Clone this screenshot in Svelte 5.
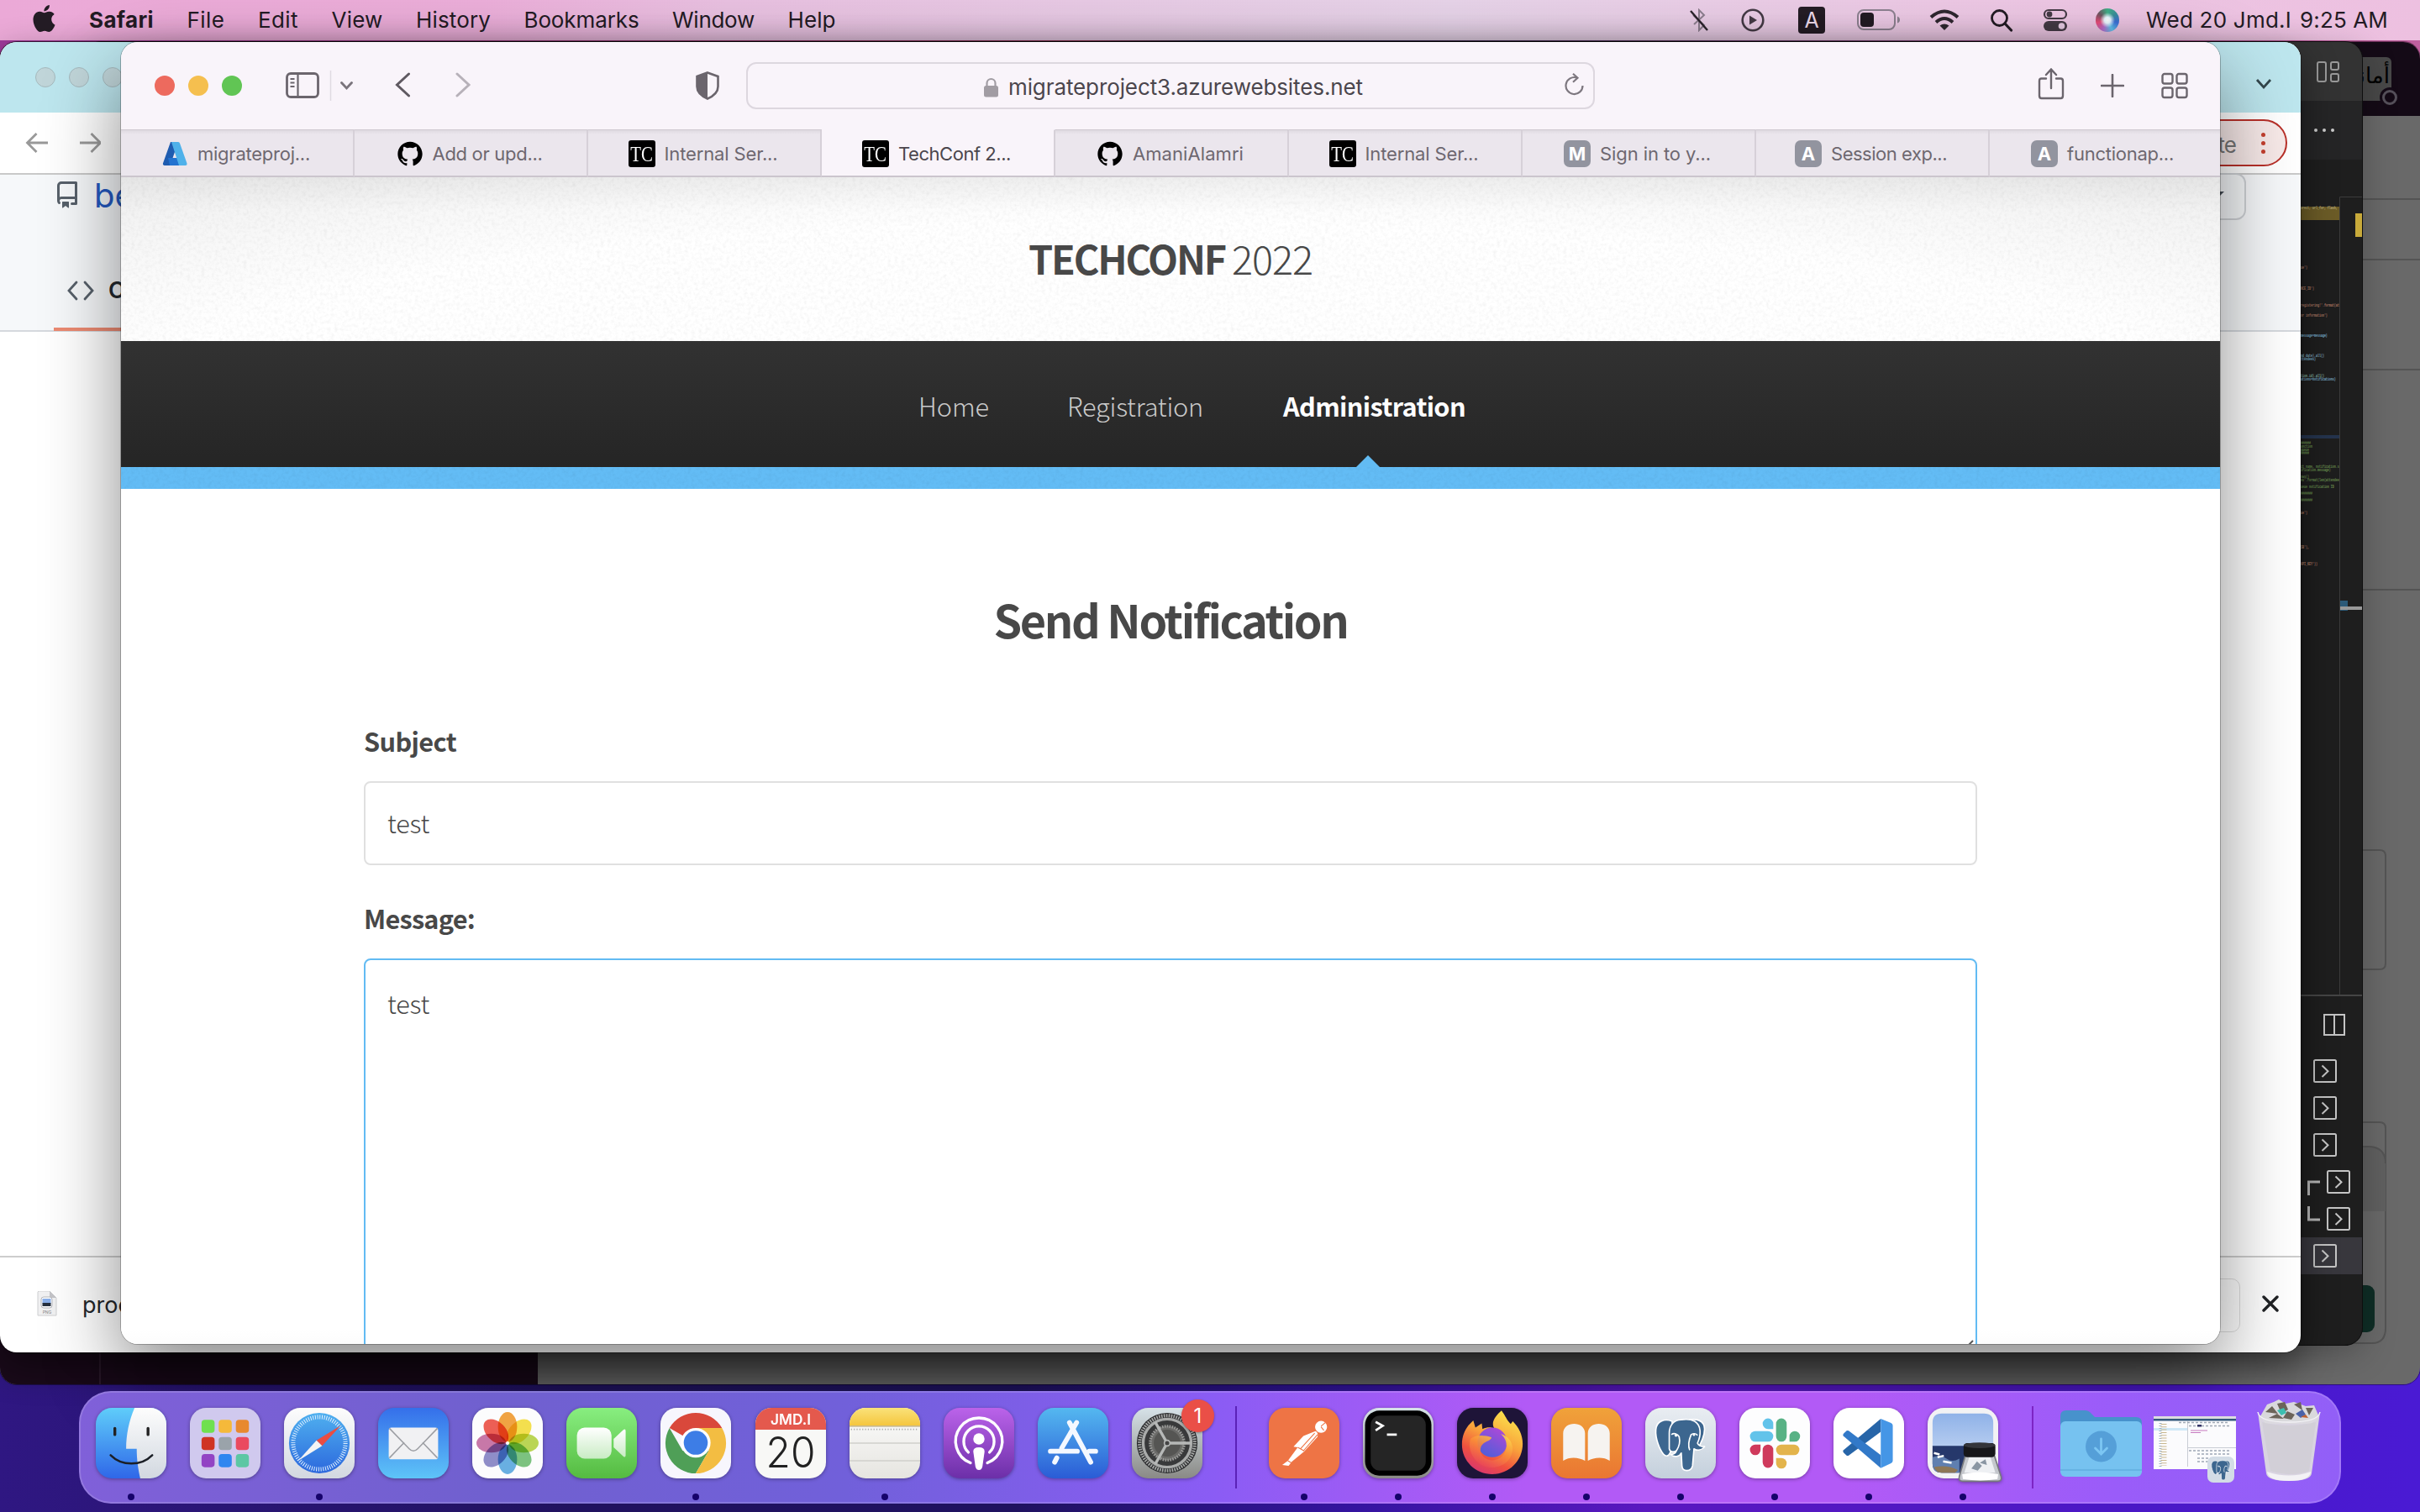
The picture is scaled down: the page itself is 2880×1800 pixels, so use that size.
<script>
  // Spreads or tightens letters so that a run of text takes a given width.
  function fit(node, width) {
    node.style.letterSpacing = '0px';
    const natural = node.getBoundingClientRect().width;
    const n = node.textContent.length;
    node.style.letterSpacing = (width - natural) / n + 'px';
  }

  const menus = [
    ['File', 45], ['Edit', 48], ['View', 61], ['History', 89],
    ['Bookmarks', 137], ['Window', 98], ['Help', 57]
  ];

  const tabs = [
    { icon: 'azure', label: 'migrateproj...', w: 134 },
    { icon: 'github', label: 'Add or upd...', w: 131 },
    { icon: 'tc', label: 'Internal Ser...', w: 135 },
    { icon: 'tc', label: 'TechConf 2...', w: 134, active: true },
    { icon: 'github', label: 'AmaniAlamri', w: 132 },
    { icon: 'tc', label: 'Internal Ser...', w: 135 },
    { icon: 'M', label: 'Sign in to y...', w: 132 },
    { icon: 'A', label: 'Session exp...', w: 138 },
    { icon: 'A', label: 'functionap...', w: 127 }
  ];

  const apps = [
    { id: 'finder', dot: true }, { id: 'launchpad' }, { id: 'safari', dot: true },
    { id: 'mail' }, { id: 'photos' }, { id: 'facetime' }, { id: 'chrome', dot: true },
    { id: 'calendar' }, { id: 'notes', dot: true }, { id: 'podcasts' },
    { id: 'appstore' }, { id: 'settings' }
  ];
  const recent = ['postman', 'terminal', 'firefox', 'books', 'postgres', 'slack', 'vscode', 'preview'];

  const code = [
    [236.7, '#b5a878', 'urect, url_for, flash,'], [290, '#b07a66', "ue')"], [308, '#b07a66', "NCE_ID')"],
    [323, '#b07a66', "registering!'.format(at"], [332, '#b07a66', "or information')"],
    [350, '#7fb4d8', 'message=message)'], [368, '#86b0c8', 'nd_date).all()'], [371, '#7fb4d8', 'ttendees)'],
    [386, '#8ab8a8', 'tion.id).all()'], [389, '#7fb4d8', 'ations=notifications)'],
    [445.5, '#6a9150', '######'], [448.5, '#6a9150', 'unction'], [451.5, '#6a9150', 'queue'], [454.5, '#6a9150', '#####'],
    [466.5, '#6a9150', 'ct_name, notification.s'], [469.5, '#6a9150', 'ification.message)'],
    [475.5, '#6a9150', 'ows()'], [478.5, '#6a9150', "es'.format(len(attendee"],
    [484.5, '#6a9150', 'ueue notification ID'], [490.5, '#6a9150', '#######'], [496.5, '#6a9150', '#######'],
    [508, '#b07a66', "ue')"], [538, '#b07a66', "SB'),"], [553, '#b07a66', "API_KEY'))"]
  ];
  const petals = ['#f29b2e', '#f5df3a', '#b5d443', '#6fbf73', '#5aa9e0', '#8583c4', '#c46aa0', '#ee4f43'];
  const launch = ['#6fe04f', '#f5b93a', '#e8892f', '#cf3423', '#9aa3aa', '#ea4a60', '#9243c4', '#2f86f0', '#5cc7a4'];
  const terminals = [0, 0, 0, 1, 2, 0];
</script>

{#snippet favicon(kind)}
  {#if kind === 'azure'}
    <svg class="fav" viewBox="0 0 32 32">
      <path d="M11 2h9L10.500 30H4a2 2 0 0 1-2-2.700z" fill="#1f5cb0" />
      <path d="M8 21h14l3 7-4 2H10z" fill="#2373d0" />
      <path d="M12 2h8a2 2 0 0 1 2 1.500l8.500 24A2 2 0 0 1 29 30h-8z" fill="#4fb1ea" />
    </svg>
  {:else if kind === 'github'}
    <svg class="fav" viewBox="0 0 24 24"><g transform="translate(1 1) scale(.916)"><path d="M12 .297c-6.63 0-12 5.373-12 12 0 5.303 3.438 9.800 8.205 11.385.6.113.82-.258.82-.577 0-.285-.01-1.040-.015-2.040-3.338.724-4.042-1.610-4.042-1.610C4.422 18.070 3.633 17.700 3.633 17.700c-1.087-.744.084-.729.084-.729 1.205.084 1.838 1.236 1.838 1.236 1.070 1.835 2.809 1.305 3.495.998.108-.776.417-1.305.76-1.605-2.665-.3-5.466-1.332-5.466-5.930 0-1.310.465-2.380 1.235-3.220-.135-.303-.54-1.523.105-3.176 0 0 1.005-.322 3.300 1.230.96-.267 1.980-.399 3-.405 1.020.006 2.040.138 3 .405 2.280-1.552 3.285-1.230 3.285-1.230.645 1.653.24 2.873.12 3.176.765.84 1.230 1.910 1.230 3.220 0 4.610-2.805 5.625-5.475 5.920.42.36.81 1.096.81 2.220 0 1.606-.015 2.896-.015 3.286 0 .315.21.69.825.57C20.565 22.092 24 17.592 24 12.297c0-6.627-5.373-12-12-12" /></g></svg>
  {:else if kind === 'tc'}
    <span class="fav tc"><span>TC</span></span>
  {:else}
    <span class="fav letter">{kind}</span>
  {/if}
{/snippet}

{#snippet elephant()}
  <g fill="#3c668f" stroke="#fff" stroke-width="2" stroke-linejoin="round">
    <path d="M38 19c-10-4-22-1-23 12-1 12 5 28 11 35 4 4 7 2 9-2l5-8z" />
    <path d="M60 18c12-4 24 0 24 12 0 11-6 22-11 30l-8-4z" />
    <path d="M51 17c-10 0-17 7-17 19v22c1 5 6 5 10 3-1 3-4 5-8 5 5 5 13 3 15-2l1 19c1 8 13 8 15-1l2-24c5 3 11 2 15-3-5 0-9-2-10-5 5-11 6-25-4-31-6-3-13-3-19-2z" />
    <path d="M37 38c4-3 9-1 11 3 2 8 0 14-4 20M63 60c-3-7-1-15 2-22 3-2 7-2 9 1" fill="none" />
  </g>
  <circle cx="43.500" cy="39" r="2" fill="#fff" /><circle cx="69" cy="38" r="1.800" fill="#fff" />
{/snippet}

{#snippet appIcon(id)}
  <svg class="app" viewBox="0 0 100 100">
    {#if id === 'finder'}
      <rect width="100" height="100" rx="23" fill="url(#g-face)" />
      <path d="M55 0h22a23 23 0 0 1 23 23v54a23 23 0 0 1-23 23H63c-3-14-5-26-5-42H43C43 38 47 18 55 0z" fill="url(#g-white)" />
      <path d="M27 29v9M74 29v9" stroke="#222" stroke-width="4" stroke-linecap="round" />
      <path d="M21 67c16 16 43 16 59 0" fill="none" stroke="#1b1f26" stroke-width="3" stroke-linecap="round" />
    {:else if id === 'launchpad'}
      <rect width="100" height="100" rx="23" fill="#d0c9ee" />
      {#each launch as c, i}
        <rect x={16.500 + (i % 3) * 24.300} y={17 + Math.floor(i / 3) * 24.300} width="18.500" height="18.500" rx="4.500" fill={c} />
      {/each}
    {:else if id === 'safari'}
      <rect width="100" height="100" rx="23" fill="url(#g-white)" />
      <circle cx="50" cy="50" r="43" fill="url(#g-blue)" />
      <circle cx="50" cy="50" r="37" fill="none" stroke="#dff0ff" stroke-width="6" stroke-dasharray="1.200 2.030" />
      <path d="M80.500 25 46 46l8 8z" fill="#ea4d43" /><path d="M20 75 46 46l8 8z" fill="#f4f4f4" />
    {:else if id === 'mail'}
      <rect width="100" height="100" rx="23" fill="url(#g-mail)" />
      <rect x="15" y="28" width="70" height="45" rx="4" fill="#f1f1f3" />
      <path d="M16 71l21-22M84 71 63 49M16 29l28 29c4 4 8 4 12 0l28-29" fill="none" stroke="#9c9ea3" stroke-width="1.800" />
    {:else if id === 'photos'}
      <rect width="100" height="100" rx="23" fill="#fcfcfd" />
      <g class="petals">
        {#each petals as c, i}
          <ellipse cx="50" cy="27" rx="13.500" ry="21" fill={c} opacity=".9" transform="rotate({i * 45} 50 50)" />
        {/each}
      </g>
      <circle cx="50" cy="50" r="2" fill="#fff" />
    {:else if id === 'facetime'}
      <rect width="100" height="100" rx="23" fill="url(#g-green)" />
      <rect x="15" y="28" width="49" height="44" rx="11" fill="url(#g-cam)" />
      <path d="M67 44 81 31q3-2 3 2v34q0 4-3 2L67 56z" fill="url(#g-cam)" />
    {:else if id === 'chrome'}
      <rect width="100" height="100" rx="23" fill="#f7f6fd" />
      <path d="M50 50 12.800 28.500A43 43 0 0 1 87.200 28.500H50z" fill="#d9483b" />
      <path d="M12.800 28.500 31.400 60.750 68.600 60.750 50 93A43 43 0 0 1 12.800 28.500" fill="#4f9f57" />
      <path d="M87.200 28.500H50L68.600 60.750 50 93A43 43 0 0 0 87.200 28.500" fill="#f3bd42" />
      <circle cx="50" cy="49.500" r="21" fill="#fff" /><circle cx="50" cy="49.500" r="17" fill="#3d7de6" />
    {:else if id === 'calendar'}
      <rect width="100" height="100" rx="23" fill="#f8f8f6" />
      <path d="M0 31V23A23 23 0 0 1 23 0h54a23 23 0 0 1 23 23v8z" fill="#e4594d" />
      <text x="50" y="23.500" class="cal-month" textLength="57" lengthAdjust="spacingAndGlyphs">JMD.I</text>
      <text x="50" y="84" class="cal-day" textLength="70" lengthAdjust="spacingAndGlyphs">20</text>
    {:else if id === 'notes'}
      <rect width="100" height="100" rx="23" fill="url(#g-paper)" />
      <path d="M0 25v-2A23 23 0 0 1 23 0h54a23 23 0 0 1 23 23v2z" fill="url(#g-yellow)" />
      <path d="M0 26h100" stroke="#b9a46a" stroke-width="1.500" />
      <path d="M2 30.500h96" stroke="#aaa" stroke-width="2" stroke-dasharray="1.500 2.500" />
      <path d="M0 50h100M0 75h100" stroke="#cfcfcc" stroke-width="1.800" />
    {:else if id === 'podcasts'}
      <rect width="100" height="100" rx="23" fill="url(#g-pod)" />
      <g fill="none" stroke="#fff" stroke-width="4" stroke-linecap="round">
        <path d="M38 78a33 33 0 1 1 24 0" /><path d="M35 63a21.500 21.500 0 1 1 30 0" />
      </g>
      <circle cx="50" cy="44" r="8" fill="#fff" /><path d="M42 62q0-6 8-6t8 6l-3 21q-1 5-5 5t-5-5z" fill="#fff" />
    {:else if id === 'appstore'}
      <rect width="100" height="100" rx="23" fill="url(#g-store)" />
      <g stroke="#f4f8ff" stroke-width="7" stroke-linecap="round">
        <path d="M55 21 34 57M45 21 75 77M18 61.500h38M73 61.500h9M27 71l-3 6" />
      </g>
    {:else if id === 'settings'}
      <rect width="100" height="100" rx="23" fill="url(#g-grey)" />
      <circle cx="50" cy="50" r="43" fill="#2b2c2e" />
      <circle cx="50" cy="50" r="39" fill="none" stroke="#a5a7a6" stroke-width="5" stroke-dasharray="2 1.500" />
      <circle cx="50" cy="50" r="34" fill="#38393a" stroke="#a9abaa" stroke-width="4" />
      <circle cx="50" cy="50" r="24" fill="#6b6b69" stroke="#9a9a98" stroke-width="4" stroke-dasharray="2 1.500" />
      <circle cx="50" cy="50" r="19" fill="#555553" />
      <path d="M50 50h34M50 50 33 20M50 50 33 80" stroke="#b6b8b7" stroke-width="4" />
      <circle cx="50" cy="50" r="4" fill="#444" stroke="#b6b8b7" stroke-width="2" />
    {:else if id === 'postman'}
      <rect width="100" height="100" rx="23" fill="#ee7445" />
      <circle cx="74" cy="27" r="8.500" fill="#fff" />
      <path d="M66 33c3 1 4 4 3 8L50 62 33 76l-5 6-9-1 8-6 14-19-6-1 14-15z" fill="#fff" />
      <path d="M65 36 45 58M69 38 49 61M41 56l9 5M74 26l6-5M74 27l4 5M27 75l5 3" stroke="#ee7445" stroke-width="1.300" />
    {:else if id === 'terminal'}
      <rect width="100" height="100" rx="23" fill="url(#g-grey)" />
      <rect x="3" y="4" width="94" height="92" rx="20" fill="#000" />
      <rect x="11" y="11" width="78" height="78" rx="13" fill="#252525" />
      <path d="m18 20 10 5.500L18 32M34 38h14" fill="none" stroke="#fff" stroke-width="3.200" />
    {:else if id === 'firefox'}
      <rect width="100" height="100" rx="23" fill="#1e1438" />
      <path d="M7 52c0-12 4-20 9-27l7-7 3 10 9-6 1 8c8-4 13-2 17-1-6-8 2-18 10-25 6 8 7 13 13 19l3-4c8 8 14 19 14 32 0 24-19 43-43 43S7 75 7 52z" fill="url(#g-fox)" />
      <circle cx="50" cy="49" r="21" fill="url(#g-orb)" />
      <path d="M19 44c6-6 20-6 30-2-2 5-7 5-11 8-8 6-6 18 5 23 12 5 27-4 27-19 0-8-3-12-8-17 13 4 20 16 15 30-7 19-36 24-50 8-8-9-11-20-8-31z" fill="url(#g-fox2)" opacity=".9" />
    {:else if id === 'books'}
      <rect width="100" height="100" rx="23" fill="url(#g-orange)" />
      <path d="M48 75c-9-5-22-6-31 0V36c0-18 31-18 31 0zM52 75c9-5 22-6 31 0V36c0-18-31-18-31 0z" fill="#f6f3f0" />
    {:else if id === 'postgres'}
      <rect width="100" height="100" rx="23" fill="url(#g-pg)" />
      {@render elephant()}
    {:else if id === 'slack'}
      <rect width="100" height="100" rx="23" fill="#fdfdfe" />
      <g fill="#62c3ea"><rect x="15" y="33" width="33" height="15" rx="7.500" /><path d="M48 30h-7.500a7.500 7.500 0 1 1 7.500-7.500z" /></g>
      <g fill="#58b285"><rect x="52" y="15" width="15" height="33" rx="7.500" /><path d="M71 48v-7.500a7.500 7.500 0 1 1 7.500 7.500z" /></g>
      <g fill="#e3b44c"><rect x="52" y="52" width="33" height="15" rx="7.500" /><path d="M52 71h7.500a7.500 7.500 0 1 1-7.500 7.500z" /></g>
      <g fill="#cf3a5c"><rect x="33" y="52" width="15" height="33" rx="7.500" /><path d="M30 52v7.500a7.500 7.500 0 1 1-7.500-7.500z" /></g>
    {:else if id === 'vscode'}
      <rect width="100" height="100" rx="23" fill="#fff" />
      <path d="M67 15.500 14 60q-1 1.500 0 3l4.500 4.500q1.500 1 3 0L67 34z" fill="#2765a8" />
      <path d="M14 37l4.500-4.500q1.500-1 3 0L67 67v18.500L14 40q-1-1.500 0-3z" fill="#3279c8" />
      <path d="m67 15.500 14.500 6q2.500 1 2.500 3.500v50q0 2.500-2.500 3.500L67 85.500z" fill="#4596e6" />
    {:else if id === 'preview'}
      <rect width="100" height="100" rx="23" fill="#f2f2f4" />
      <path d="M20 8h60q13 0 13 13v34H7V21Q7 8 20 8z" fill="url(#g-sky)" />
      <path d="M7 54h86v25q0 13-13 13H20Q7 92 7 79z" fill="#26386b" />
      <path d="M7 70q12-4 20 2t18 0v20H20Q7 92 7 79z" fill="#5f7fb0" /><path d="M9 64l8 2M22 76l12 2M14 70l9-2" stroke="#fff" stroke-width="3" />
      <path d="M9 84q18-4 34 4l-4 4H20q-8 0-11-8z" fill="#8d7757" />
      <path d="M54 66h40l10 31q2 7-5 7H50q-7 0-5-7z" fill="#c4c7cc" stroke="#77797d" stroke-width="2" />
      <path d="M59 70h30l7 22H52z" fill="#eef0f3" /><path d="m62 86 8-10 7 6-6 7zM74 78l8-5 2 8z" fill="#8a96a3" />
      <path d="M49 94q25-6 51 0l-1 7q-24 4-49 0z" fill="#fff" />
      <rect x="51" y="50" width="45" height="20" rx="5" fill="#17171a" /><ellipse cx="73.500" cy="53" rx="22.500" ry="4" fill="#34353a" />
    {/if}
  </svg>
{/snippet}

<svg class="defs" aria-hidden="true">
  <defs>
    <linearGradient id="g-face" x2="0" y2="1"><stop stop-color="#5fcdfa" /><stop offset="1" stop-color="#2f67e8" /></linearGradient>
    <linearGradient id="g-white" x2="0" y2="1"><stop stop-color="#fdfdfd" /><stop offset="1" stop-color="#d2d8e0" /></linearGradient>
    <linearGradient id="g-blue" x2="0" y2="1"><stop stop-color="#4fb0ef" /><stop offset="1" stop-color="#2c68dd" /></linearGradient>
    <linearGradient id="g-mail" x2="0" y2="1"><stop stop-color="#356fea" /><stop offset="1" stop-color="#5ec4f8" /></linearGradient>
    <linearGradient id="g-green" x2="0" y2="1"><stop stop-color="#88ee80" /><stop offset="1" stop-color="#55bb41" /></linearGradient>
    <linearGradient id="g-cam" x2="0" y2="1"><stop stop-color="#fff" /><stop offset="1" stop-color="#c9ecc4" /></linearGradient>
    <linearGradient id="g-paper" x2="0" y2="1"><stop stop-color="#fcfcfc" /><stop offset="1" stop-color="#e6e5e0" /></linearGradient>
    <linearGradient id="g-yellow" x2="0" y2="1"><stop stop-color="#fae27a" /><stop offset="1" stop-color="#f5c63e" /></linearGradient>
    <linearGradient id="g-pod" x2="0" y2="1"><stop stop-color="#bb63ea" /><stop offset="1" stop-color="#6c2fa8" /></linearGradient>
    <linearGradient id="g-store" x2="0" y2="1"><stop stop-color="#54b8f0" /><stop offset="1" stop-color="#2a5cd6" /></linearGradient>
    <linearGradient id="g-grey" x2="0" y2="1"><stop stop-color="#d6e2e8" /><stop offset="1" stop-color="#8a8a86" /></linearGradient>
    <linearGradient id="g-orange" x2="0" y2="1"><stop stop-color="#f0a23a" /><stop offset="1" stop-color="#ea7632" /></linearGradient>
    <linearGradient id="g-pg" x2="0" y2="1"><stop stop-color="#e9edf2" /><stop offset="1" stop-color="#c4d0dc" /></linearGradient>
    <linearGradient id="g-sky" x2="0" y2="1"><stop stop-color="#8fb2e8" /><stop offset="1" stop-color="#b5ccf0" /></linearGradient>
    <linearGradient id="g-fox" x1=".8" y1="0" x2=".3" y2="1"><stop stop-color="#fbe84e" /><stop offset=".45" stop-color="#f9a23b" /><stop offset=".75" stop-color="#f0503f" /><stop offset="1" stop-color="#d8366f" /></linearGradient>
    <linearGradient id="g-fox2" x1=".9" y1="0" x2=".3" y2="1"><stop stop-color="#fbe04e" /><stop offset=".5" stop-color="#f98b38" /><stop offset="1" stop-color="#e9415a" /></linearGradient>
    <linearGradient id="g-orb" x1=".8" y1="0" x2=".2" y2="1"><stop stop-color="#b048d8" /><stop offset="1" stop-color="#4a5fd8" /></linearGradient>
    <filter id="grain" x="0" y="0" width="100%" height="100%">
      <feTurbulence type="fractalNoise" baseFrequency=".24" numOctaves="3" seed="4" />
      <feColorMatrix values="0 0 0 0 0  0 0 0 0 0  0 0 0 0 0  .5 .5 0 0 -.42" />
    </filter>
  </defs>
</svg>

<div class="desktop">
  <header class="menubar">
    <svg class="apple" viewBox="0 0 24 24"><path d="M12.152 6.896c-.948 0-2.415-1.078-3.960-1.040-2.040.027-3.910 1.183-4.961 3.014-2.117 3.675-.546 9.103 1.519 12.090 1.013 1.454 2.208 3.090 3.792 3.039 1.520-.065 2.090-.987 3.935-.987 1.831 0 2.350.987 3.960.948 1.637-.026 2.676-1.480 3.676-2.948 1.156-1.688 1.636-3.325 1.662-3.415-.039-.013-3.182-1.221-3.220-4.857-.026-3.040 2.480-4.494 2.597-4.559-1.429-2.090-3.623-2.324-4.390-2.376-2-.156-3.675 1.090-4.610 1.090zM15.530 3.830c.843-1.012 1.400-2.427 1.245-3.830-1.207.052-2.662.805-3.532 1.818-.78.896-1.454 2.338-1.273 3.714 1.338.104 2.715-.688 3.559-1.701" /></svg>
    <nav>
      <b><span use:fit={77}>Safari</span></b>
      {#each menus as [label, w]}<span use:fit={w}>{label}</span>{/each}
    </nav>
    <div class="status">
      <svg width="24" height="28" viewBox="0 0 24 28"><path d="m5 8 13 12-6 6V2l6 6L6 19" fill="none" stroke="#8d7f8f" stroke-width="2" /><path d="M2 3l20 23" stroke="#2c242d" stroke-width="2.400" /></svg>
      <svg width="28" height="28" viewBox="0 0 28 28"><circle cx="14" cy="14" r="12.300" fill="none" stroke="#453b46" stroke-width="2.600" /><path d="m10 8.500 9 5.500-9 5.500z" fill="#453b46" /></svg>
      <span class="lang">A</span>
      <svg width="52" height="26" viewBox="0 0 52 26"><rect x="1" y="1" width="44" height="23" rx="7" fill="none" stroke="#8d8190" stroke-width="2" /><rect x="4" y="4" width="16" height="17" rx="4" fill="#231c24" /><path d="M48 8.500q3 1 3 4t-3 4z" fill="#8d8190" /></svg>
      <svg width="36" height="26" viewBox="0 0 36 26"><g fill="none" stroke="#2f2730" stroke-width="4"><path d="M2 9.500q16-14 32 0" /><path d="M8 15.500q10-9 20 0" /></g><path d="M12.500 19.500q5.500-4 11 0L18 25z" fill="#2f2730" /></svg>
      <svg width="28" height="28" viewBox="0 0 28 28"><circle cx="11.500" cy="11.500" r="9" fill="none" stroke="#231c24" stroke-width="2.800" /><path d="m18 18 7.500 8" stroke="#231c24" stroke-width="3.200" stroke-linecap="round" /></svg>
      <svg width="30" height="28" viewBox="0 0 30 28"><rect x="2" y="2" width="26" height="10" rx="5" fill="none" stroke="#453b46" stroke-width="2.200" /><circle cx="8" cy="7" r="3.400" fill="#453b46" /><rect x="1" y="15" width="28" height="12" rx="6" fill="#453b46" /><circle cx="22.500" cy="21" r="3.800" fill="#e9cde6" /></svg>
      <span class="siri"></span>
      <span class="clock"><span use:fit={173}>Wed 20 Jmd.I</span><span use:fit={105}>9:25 AM</span></span>
    </div>
  </header>

  <section class="window back">
    <div class="back-bar">
      <span class="thumb">أماني</span>
      <svg width="24" height="24" viewBox="0 0 24 24"><circle cx="12" cy="12" r="12" fill="#140a16" /><circle cx="12" cy="12" r="7.500" fill="none" stroke="#55505a" stroke-width="3" /></svg>
    </div>
    <svg class="back-body" viewBox="0 138 2880 1510">
      <rect y="138" width="2880" height="1510" fill="#696969" />
      <rect y="1500" width="640" height="150" fill="#1a0a1a" /><path d="M119 1500v148" stroke="#2c1a2c" stroke-width="2" />
      <g stroke="#545454" stroke-width="2" fill="none">
        <path d="M2812 237h68M2812 309h68M2812 440h68M2812 702h68" />
        <path d="M2800 1012h32q7 0 7 7v128q0 7-7 7h-32" /><path d="M2800 1336h32q7 0 7 7v238q0 18-16 18h-23" />
        <path d="M2800 1365h18q21 0 21 20v57h-39" fill="#606060" stroke="none" /><path d="M2800 1365h18q21 0 21 20" />
      </g>
      <rect x="2780" y="1530" width="46" height="56" rx="9" fill="#0f2e26" />
    </svg>
  </section>

  <section class="window editor">
    <div class="ed-title"><svg width="28" height="26" viewBox="0 0 28 26"><g fill="none" stroke="#9a9a9a" stroke-width="2"><rect x="1" y="1" width="10" height="23" rx="2" /><rect x="17" y="1" width="9" height="9" rx="2" /><rect x="17" y="15" width="9" height="9" rx="2" /></g></svg></div>
    <div class="ed-tabs"><i></i><i></i><i></i></div>
    <svg class="minimap" viewBox="2712 190 100 994">
      <rect x="2712" y="246" width="72" height="16" fill="#6c5c27" />
      <rect x="2712" y="518" width="72" height="4" fill="#25344d" />
      <g class="tiny" transform="translate(0 -67.860) scale(1 1.339)">{#each code as [y, c, t]}<text x="2738" y={y} fill={c}>{t}</text>{/each}</g>
      <rect x="2784" y="190" width="28" height="994" fill="#1e1e1e" />
      <path d="M2784.500 1184V234.500H2812" stroke="#3c3c3c" fill="none" />
      <rect x="2803" y="254" width="9" height="28" fill="#c8aa3a" />
      <rect x="2785" y="715" width="9" height="12" fill="#2c5a78" /><rect x="2785" y="722" width="27" height="4" fill="#999" />
    </svg>
    <div class="ed-panel">
      <svg class="split" width="26" height="26" viewBox="0 0 26 26"><path d="M1 1h24v24H1zM13 1v24" fill="none" stroke="#c5c5c5" stroke-width="2" /></svg>
      {#each terminals as t, i}
        <div class="term" class:sel={i === 5}>
          {#if t}<svg width="15" height="44" viewBox="0 0 15 44"><path d={t === 1 ? 'M15 22H1.500v16' : 'M15 23H1.500V7'} fill="none" stroke="#b5b5b5" stroke-width="3" /></svg>{/if}
          <svg class:nested={t} width="28" height="28" viewBox="0 0 28 28"><rect x="1" y="1" width="26" height="26" rx="1.500" fill="none" stroke="#c5c5c5" stroke-width="2" /><path d="m10.500 7.500 7 6.700-7 6.800" fill="none" stroke="#c5c5c5" stroke-width="2" /></svg>
        </div>
      {/each}
    </div>
  </section>

  <section class="window chrome">
    <div class="c-title">
      <div class="ghosts"><i></i><i></i><i></i></div>
      <svg width="20" height="14" viewBox="0 0 20 14"><path d="m2 2 8 9 8-9" fill="none" stroke="#33474c" stroke-width="2.800" /></svg>
    </div>
    <div class="c-tools">
      <svg width="92" height="26" viewBox="0 0 92 26"><path d="M29 13H5M15.500 2 4.500 13l11 11M67 13h24M80.500 2l11 11-11 11" fill="none" stroke="#999" stroke-width="2.800" /></svg>
      <div class="update"><span>te</span><div><i></i><i></i><i></i></div></div>
    </div>
    <div class="c-repo">
      <div class="c-name">
        <svg width="32" height="32" viewBox="0 0 16 16"><path fill="#57606a" d="M2 2.500A2.500 2.500 0 0 1 4.500 0h8.750a.75.75 0 0 1 .75.75v12.500a.75.75 0 0 1-.75.75h-2.500a.75.75 0 0 1 0-1.500h1.750v-2h-8a1 1 0 0 0-.714 1.700.75.75 0 1 1-1.072 1.050A2.495 2.495 0 0 1 2 11.500Zm10.500-1h-8a1 1 0 0 0-1 1v6.708A2.486 2.486 0 0 1 4.500 9h8ZM5 12.250a.25.25 0 0 1 .25-.25h3.500a.25.25 0 0 1 .25.25v3.250a.25.25 0 0 1-.4.2l-1.450-1.087a.249.249 0 0 0-.3 0L5.400 15.700a.25.25 0 0 1-.4-.2Z" /></svg>
        <span class="owner">be</span><span class="drop"><svg width="20" height="8" viewBox="0 0 20 8"><path d="M0 0h20l-8 8H8z" fill="#444c56" /></svg></span>
      </div>
      <div class="c-tab">
        <svg width="32" height="24" viewBox="0 0 32 24"><path d="M11 2 2 12l9 10M21 2l9 10-9 10" fill="none" stroke="#57606a" stroke-width="2.800" stroke-linecap="round" /></svg><b>Co</b>
      </div>
    </div>
    <div class="c-page"></div>
    <div class="c-down">
      <svg width="24" height="30" viewBox="0 0 24 30"><path d="M2 0h13l8 8v21H1V1z" fill="#f1f1f2" stroke="#cfd0d2" /><path d="M15 0v8h8z" fill="#c4c4c8" /><rect x="5" y="7" width="13" height="13" rx="3" fill="#fff" stroke="#b5b7bd" /><rect x="6.500" y="9" width="10" height="6" fill="#8bb0ea" /><rect x="6.500" y="14" width="10" height="4" fill="#26303f" /><text x="12" y="27" class="png">PNG</text></svg>
      <span>proc</span>
      <div class="showall"></div>
      <svg width="20" height="20" viewBox="0 0 20 20"><path d="m2 2 16 16M18 2 2 18" stroke="#202225" stroke-width="3.400" stroke-linecap="round" /></svg>
    </div>
  </section>

  <section class="window browser">
    <div class="toolbar">
      <div class="lights"><i class="r"></i><i class="y"></i><i class="g"></i></div>
      <svg class="side" width="80" height="36" viewBox="0 0 80 36" fill="none"><rect x="1.500" y="3.500" width="37" height="28" rx="4.500" stroke="#6b656d" stroke-width="2.800" /><path d="M14.500 3v29M5.500 10h5M5.500 14.500h5M5.500 19h5" stroke="#6b656d" stroke-width="2.200" /><path d="M53.500 0v36" stroke="#e0dae2" stroke-width="1.500" /><path d="m66.500 14.500 6 6.500 6-6.500" stroke="#7a747c" stroke-width="2.800" stroke-linecap="round" /></svg>
      <svg class="nav" width="92" height="30" viewBox="0 0 92 30" fill="none" stroke-width="3" stroke-linecap="round"><path d="M16.500 2 2.500 15l14 13" stroke="#5f5961" /><path d="m74 2 14 13-14 13" stroke="#b7b1b9" /></svg>
      <svg class="shield" width="28" height="34" viewBox="0 0 28 34"><path d="M14 1.500 26.500 6v12q0 9-12.500 14.500Q1.500 27 1.500 18V6z" fill="none" stroke="#6b656d" stroke-width="2.600" /><path d="M14 1.500V32.500Q1.500 27 1.500 18V6z" fill="#6b656d" /></svg>
      <div class="url">
        <svg width="19" height="24" viewBox="0 0 19 24"><rect x="1" y="10" width="17" height="13.500" rx="2.500" fill="#a19ca3" /><path d="M4.500 11V7a5 5 0 0 1 10 0v4" fill="none" stroke="#a19ca3" stroke-width="2.200" /></svg>
        <span use:fit={422}>migrateproject3.azurewebsites.net</span>
        <svg class="reload" width="24" height="28" viewBox="0 0 24 28" fill="none" stroke="#7d777f" stroke-width="2.200"><path d="M14.500 5.500a10 10 0 1 0 7 9.500" /><path d="m10 .8 5.500 5-5.500 5" /></svg>
      </div>
      <div class="actions">
        <svg width="32" height="38" viewBox="0 0 32 38" fill="none" stroke="#6b656d" stroke-width="2.400" stroke-linecap="round"><path d="M10 12.500H4.500Q2 12.500 2 15.500v17.500q0 3 2.500 3h23q2.500 0 2.500-3V15.500q0-3-2.500-3H22M16 24V2M10 8l6-6.500L22 8" /></svg>
        <svg width="28" height="28" viewBox="0 0 28 28"><path d="M14 1v26M1 14h26" stroke="#6b656d" stroke-width="2.600" stroke-linecap="round" /></svg>
        <svg width="32" height="32" viewBox="0 0 32 32" fill="none" stroke="#6b656d" stroke-width="2.400"><rect x="1.500" y="2" width="12" height="11.500" rx="2.500" /><rect x="18.500" y="2" width="12" height="11.500" rx="2.500" /><rect x="1.500" y="18.500" width="12" height="11.500" rx="2.500" /><rect x="18.500" y="18.500" width="12" height="11.500" rx="2.500" /></svg>
      </div>
    </div>
    <div class="tabs">
      {#each tabs as t}
        <div class="tab" class:active={t.active}>{@render favicon(t.icon)}<span use:fit={t.w}>{t.label}</span></div>
      {/each}
    </div>

    <div class="hero">
      <svg class="grain"><rect width="100%" height="100%" filter="url(#grain)" /></svg>
      <h1><b use:fit={234}>TECHCONF</b><span use:fit={96}>2022</span></h1>
    </div>
    <div class="sitenav">
      <span use:fit={84}>Home</span>
      <span use:fit={162}>Registration</span>
      <div class="current"><b use:fit={217}>Administration</b><i></i></div>
    </div>
    <div class="stripe"><svg class="grain"><rect width="100%" height="100%" filter="url(#grain)" /></svg></div>
    <main>
      <h2><span use:fit={421}>Send Notification</span></h2>
      <form>
        <div class="label"><span use:fit={110}>Subject</span></div>
        <div class="field one"><span use:fit={50}>test</span></div>
        <div class="label second"><span use:fit={132}>Message:</span></div>
        <div class="field area"><span use:fit={50}>test</span><svg width="12" height="12" viewBox="0 0 12 12"><path d="M1 11 11 1" stroke="#555" stroke-width="2" /></svg></div>
      </form>
    </main>
  </section>

  <footer class="dock">
    {#each apps as a}
      <div class="slot">{@render appIcon(a.id)}<i class:on={a.dot}></i>{#if a.id === 'settings'}<span class="badge">1</span>{/if}</div>
    {/each}
    <div class="sep"></div>
    {#each recent as id}
      <div class="slot">{@render appIcon(id)}<i class="on"></i></div>
    {/each}
    <div class="sep second"></div>
    <div class="files">
      <svg width="97" height="84" viewBox="0 0 97 84"><path d="M0 10q0-7 7-7h22q5 0 8 4l4 4h49q7 0 7 7v30H0z" fill="#4792cc" /><rect y="16" width="97" height="66" rx="6" fill="#76c2f0" /><path d="M0 74h97" stroke="#62aee0" stroke-width="1.500" /><circle cx="48.500" cy="46" r="18.500" fill="#559fd8" /><path d="M48.500 37v17M41.500 48l7 7 7-7" fill="none" stroke="#7cc6f3" stroke-width="2.800" stroke-linecap="round" /></svg>
      <svg width="98" height="84" viewBox="0 0 98 84">
        <rect y="10" width="98" height="63" fill="#fbfbfd" /><rect y="10" width="98" height="3" fill="#dcdce0" /><rect y="13" width="98" height="2.500" fill="#33587c" /><rect y="24" width="40" height="3" fill="#cfe8f7" />
        <path d="M40.500 16v54M40 47.500h58" stroke="#c9ccd4" /><path d="M8 18v52" stroke="#9fb4c4" stroke-width="3" stroke-dasharray="1 2" /><path d="M12 19v50" stroke="#c9b78e" stroke-width="7" stroke-dasharray="1 2.300" />
        <path d="M42 21.500h50M30 17.500h60M42 51h50M52 55h40M52 60h34M52 64h28" stroke="#9fa8b5" stroke-width="1.500" stroke-dasharray="3 2" /><path d="M44 27h20M44 29.500h12" stroke="#c77bc0" stroke-width="1.200" /><rect x="52" y="20" width="5" height="2.500" fill="#336" />
        <rect x="64" y="58" width="32" height="31" rx="7" fill="#d3dce6" /><g transform="translate(64 57.500) scale(.32)">{@render elephant()}</g>
      </svg>
      <svg width="76" height="100" viewBox="0 0 76 100">
        <path d="M4 20 12 6l8-3 6-3 8 5 10-2 14 5 10-1 6 14-10 8H10z" fill="#d9d9dc" /><path d="m10 15 8-7 7 9zM24 5l9-2 4 9-8 5zM44 6l8-3 2 10zM58 10l9 0-5 9zM14 22l10-5 8 6zM36 14l9 4-4 6-10-2z" fill="#6b6459" /><path d="m24 13 8-3 3 6-6 3z" fill="#3cbfb0" /><path d="m46 17 8-5 4 6-6 4z" fill="#4a62a8" /><path d="m52 21 6-3 3 4z" fill="#c0602f" />
        <path d="M1 15q2 12 37 12t37-12L65 88q-1 9-27 9t-27-9z" fill="#dcdadf" opacity=".95" /><path d="M6 27q30 8 64 0l-8 58q-20 8-46 0z" fill="#cdcbd0" opacity=".6" />
        <path d="M1 15q2 12 37 12t37-12" fill="none" stroke="#f3f2f6" stroke-width="1.500" /><path d="M12 86q26 9 52 0-1 11-26 11T12 86z" fill="#f3f2f5" />
      </svg>
    </div>
  </footer>
</div>

<style>
  :global(body) { margin: 0; background: #24146c; }
  * { box-sizing: border-box; }
  .defs { position: absolute; width: 0; height: 0; }
  span, b { white-space: pre; }
  svg { display: block; flex: none; }
  .desktop {
    position: relative; width: 2880px; height: 1800px; overflow: hidden;
    font-family: Inter, "Liberation Sans", sans-serif;
    background:
      linear-gradient(90deg, #a03a9c, #8a3050 45%, #202040 50%, #b0508f 95%, #c0609f) 0 0 / 100% 90px no-repeat,
      linear-gradient(90deg, #2f1782 0, #20125f 24%, #1f1260 42%, #3414a0 56%, #5a18c0 68%, #4a18c6 88%, #4a1ad4 100%);
  }
  .menubar { height: 48px; display: flex; align-items: center; font-size: 26px; color: #241c25; background: linear-gradient(90deg, #eba9d7 0, #ebaed9 20%, #e8c0e0 30%, #e6d3e8 60%, #ecc8e4 80%, #edc0e0 100%); }
  .apple { width: 33px; height: 32px; margin: -5px 0 0 36px; fill: #241c25; }
  .menubar nav { display: flex; gap: 39.500px; margin-left: 37px; padding-bottom: 2px; }
  .status { display: flex; align-items: center; margin-left: auto; width: 870px; height: 48px; }
  .status > :nth-child(2) { margin-left: 38px; }
  .lang { width: 32px; height: 32px; margin-left: 40px; border-radius: 4px; background: #241c25; color: #f0dced; font-size: 25px; line-height: 32px; text-align: center; }
  .status > :nth-child(4) { margin-left: 38px; }
  .status > :nth-child(5) { margin-left: 34px; }
  .status > :nth-child(6) { margin-left: 36px; }
  .status > :nth-child(7) { margin-left: 35px; }
  .siri { width: 28px; height: 28px; margin-left: 33px; border-radius: 50%; background: radial-gradient(circle at 50% 50%, #fff 0, #e9f6ff 18%, transparent 45%), conic-gradient(#3fae86, #3a8f98, #3d6fd8, #62c6f0, #b86fd0, #ea4a78, #6c5560, #3fae86); }
  .clock { display: flex; gap: 10px; margin-left: 32px; padding-bottom: 2px; }

  .window { position: absolute; top: 50px; display: flex; flex-direction: column; overflow: hidden; border-radius: 20px; }
  .back { left: 0; width: 2880px; height: 1598px; box-shadow: 0 0 0 1px #0006; }
  .back-bar { height: 88px; display: flex; justify-content: flex-end; align-items: flex-start; padding: 18px 24px 0 0; background: #140a16; }
  .back-bar svg { margin: 36px 0 0 -14px; }
  .thumb { width: 60px; height: 52px; border-radius: 6px; background: #484848; color: #000; font: 26px/44px "DejaVu Sans", sans-serif; text-align: right; padding-right: 4px; }
  .back-body { width: 2880px; height: 1510px; }

  .editor { left: 100px; width: 2711px; height: 1551px; background: #1e1e1e; align-items: flex-end; box-shadow: 0 10px 40px #0004, 0 0 0 1px #111; }
  .ed-title { width: 100%; height: 70px; background: #333; display: flex; justify-content: flex-end; padding: 23px 26px 0 0; }
  .ed-tabs { width: 100%; height: 70px; background: #252526; display: flex; justify-content: flex-end; align-items: center; gap: 6px; padding-right: 33px; }
  .ed-tabs i { width: 4px; height: 4px; border-radius: 50%; background: #ccc; }
  .minimap { width: 100px; height: 994px; margin-right: -1px; }
  .tiny { font: bold 3.330px "Liberation Mono", monospace; }
  .ed-panel { width: 100%; border-top: 2px solid #454545; display: flex; flex-direction: column; align-items: flex-end; }
  .split { margin: 21px 20px 20px 0; }
  .term { width: 100%; height: 44px; display: flex; align-items: center; justify-content: flex-end; padding-right: 30px; gap: 8px; }
  .term:has(.nested) { padding-right: 14px; }
  .term.sel { background: #38373d; }

  .chrome { left: 0; width: 2738px; height: 1560px; background: #fff; box-shadow: 0 16px 44px #0007, 0 0 0 1px #0005; }
  .c-title { height: 84px; display: flex; justify-content: space-between; align-items: center; padding: 0 34px 0 42px; background: #bde6ee; }
  .c-title > svg { margin-top: 16px; }
  .ghosts { display: flex; gap: 16px; }
  .ghosts i { width: 24px; height: 24px; border-radius: 50%; background: #c0d5d9; border: 1px solid #a5b9bd; }
  .c-tools { height: 74px; display: flex; justify-content: space-between; align-items: center; padding: 0 16px 0 28px; border-bottom: 2px solid #c9c9c9; }
  .update { width: 120px; height: 56px; display: flex; align-items: center; justify-content: flex-end; gap: 30px; padding: 4px 24px 0 0; border: 2.500px solid #b93029; border-radius: 28px; background: #f8eae9; color: #757575; font-size: 26px; }
  .update span { letter-spacing: -1px; }
  .update div { display: flex; flex-direction: column; gap: 5px; margin-bottom: 4px; }
  .update i { width: 5px; height: 5px; border-radius: 50%; background: #c5402f; }
  .c-repo { height: 187px; background: #f6f8fa; border-bottom: 2px solid #d5d9de; display: flex; flex-direction: column; justify-content: space-between; padding-left: 64px; }
  .c-name { display: flex; align-items: flex-start; }
  .c-name > svg { margin-top: 8px; }
  .owner { color: #2459c0; font-size: 40px; line-height: 50px; margin-left: 16px; }
  .drop { width: 56px; height: 56px; margin: -2px 65px 0 auto; border: 2px solid #cfd2d6; border-radius: 12px; padding: 20px 0 0 8px; }
  .c-tab { width: 200px; display: flex; align-items: center; gap: 17px; padding: 0 0 28px 16px; border-bottom: 4px solid #ec8a72; color: #24292f; font-size: 27px; margin-bottom: -1px; }
  .c-tab b { font-weight: 600; }
  .c-page { flex: 1; }
  .c-down { height: 115px; border-top: 2px solid #cdcdcd; display: flex; align-items: center; padding: 0 26px 0 44px; font-size: 27px; color: #24262a; }
  .c-down > svg { margin-bottom: 3px; }
  .c-down > span { margin-left: 30px; }
  .showall { width: 150px; height: 64px; margin: 0 26px 0 auto; border: 1px solid #ddd; border-radius: 10px; }
  .png { font-size: 5px; text-anchor: middle; fill: #888; }

  .browser { left: 144px; width: 2498px; height: 1550px; background: #fff; box-shadow: 0 36px 90px rgba(0, 0, 0, .46), 0 0 0 1px rgba(0, 0, 0, .25); }
  .toolbar { height: 104px; display: flex; align-items: center; background: #f9f4fa; padding: 0 38px 0 40px; flex: none; }
  .lights { display: flex; gap: 16px; }
  .lights i { width: 24px; height: 24px; border-radius: 50%; }
  .r { background: #ed6a5e; } .y { background: #f5bf4f; } .g { background: #61c554; }
  .side { margin-left: 52px; }
  .nav { margin: -2px 0 0 50px; }
  .shield { margin-left: 266px; }
  .url { position: relative; width: 1010px; height: 56px; margin-left: 32px; display: flex; align-items: center; justify-content: center; gap: 11px; border: 2px solid #ddd7df; border-radius: 12px; font-size: 26px; color: #4b464d; padding: 3px 0 0 6px; }
  .reload { position: absolute; right: 10px; top: 11px; }
  .actions { display: flex; align-items: center; gap: 44px; margin-left: auto; }
  .actions svg:first-child { margin: -4px -1px 0 0; }
  .tabs { display: grid; grid-template-columns: repeat(8, 278px) 1fr; height: 57px; flex: none; }
  .tab { display: flex; align-items: center; justify-content: center; gap: 11px; padding: 1px 3px 0 0; font-size: 22px; color: #6e6870; background: linear-gradient(#dfdae1, #ebe6ed 5px); border-right: 2px solid #d6d0d8; border-top: 1px solid #cfc9d1; border-bottom: 2px solid #cbc5cd; }
  .tab.active { background: #f9f4fa; border-top-color: #f9f4fa; color: #4b464d; }
  .tab:last-child { border-right: 0; padding-right: 6px; }
  .fav { width: 32px; height: 32px; }
  .tc { display: flex; justify-content: center; background: #000; border-radius: 3px; color: #fff; font: 26px/33px "Liberation Serif", serif; }
  .tc span { transform: scaleX(.8); }
  .letter { border-radius: 7px; background: #92949f; color: #fff; font-weight: 700; font-size: 22px; line-height: 32px; text-align: center; }

  .hero, .sitenav, h2, form { font-family: "Noto Sans CJK SC", "Open Sans", sans-serif; }
  .hero { position: relative; height: 195px; flex: none; padding-top: 66px; background: radial-gradient(ellipse 1900px 290px at 50% 120%, #fff 62%, #f8f8f8 80%, #efefef 100%); }
  .hero::after { content: ""; position: absolute; inset: 0; background: linear-gradient(rgba(0, 0, 0, .04), transparent 40px); }
  .grain { position: absolute; inset: 0; width: 100%; height: 100%; opacity: .11; }
  h1 { position: relative; margin: 0; display: flex; justify-content: center; gap: 8px; font-size: 46.800px; line-height: 60px; font-weight: 300; color: #484848; }
  h1 b, .current b { font-weight: 700; }
  .sitenav { height: 150px; flex: none; display: flex; align-items: center; gap: 94px; padding: 3px 0 0 949px; background: linear-gradient(#323232, #252525); color: #c9c9c9; font-size: 30.700px; font-weight: 300; line-height: 147px; }
  .sitenav > span + span { margin-left: -1px; }
  .current { position: relative; color: #fff; margin-left: 1px; }
  .current i { position: absolute; left: 87px; bottom: 0; border: 14px solid transparent; border-top: 0; border-bottom-color: #62bbf3; }
  .stripe { position: relative; height: 26px; flex: none; background: #63bcf5; }
  main { flex: 1; background: linear-gradient(#fff 97%, #fafafa); padding-top: 120px; }
  h2 { margin: 0; text-align: center; font-size: 54px; line-height: 70px; font-weight: 700; color: #484848; }
  form { width: 1920px; margin: 85px auto 0; font-size: 30.700px; color: #484848; }
  .label { height: 50px; line-height: 50px; font-weight: 700; margin-bottom: 23px; }
  .label.second { margin-top: 38px; }
  .field { position: relative; border: 2px solid #e0e0e0; border-radius: 8px; padding-left: 26px; font-weight: 300; background: #fff; }
  .one { height: 100px; line-height: 94px; }
  .area { height: 472px; line-height: 50px; padding-top: 26px; border-color: #62bbf3; }
  .area svg { position: absolute; right: 2px; bottom: 4px; }
  form span, h2 span { display: inline-block; }

  .dock { position: absolute; left: 94px; top: 1656px; width: 2692px; height: 134px; display: flex; border: 2px solid rgba(255, 255, 255, .16); border-radius: 38px; background: linear-gradient(90deg, #8060d9 0, #7060cf 18%, #7160da 34%, #8a5cf4 50%, #b25af6 64%, #b25af6 78%, #9a5cf9 90%, #925ff7 100%); background-origin: border-box; padding: 18px 0 0 18px; }
  .slot { position: relative; width: 84px; margin-right: 28.080px; display: flex; flex-direction: column; align-items: center; gap: 18px; }
  .app { width: 84px; height: 84px; overflow: visible; filter: drop-shadow(0 1px 2px rgba(0, 0, 0, .35)); }
  .slot i { width: 8px; height: 8px; border-radius: 50%; }
  .slot i.on { background: #16036b; }
  .badge { position: absolute; right: -14px; top: -10px; width: 39px; height: 39px; border-radius: 50%; background: #ea4f47; color: #fff; font-size: 24px; line-height: 40px; text-align: center; box-shadow: 0 1px 3px #0005; }
  .sep { width: 2px; height: 98px; margin: -2px 38px 0 11px; background: #5a22b8; }
  .sep.second { margin: -2px 32px 0 11px; background: #7d25c4; }
  .files { display: flex; }
  .files svg { overflow: visible; margin-right: 14px; }
  .files svg:last-child { margin: -10px 0 0 11px; }
  .cal-month { font-size: 21px; font-weight: 600; text-anchor: middle; fill: #fff; }
  .cal-day { font-size: 60px; font-weight: 300; text-anchor: middle; fill: #222; }
  .petals ellipse { mix-blend-mode: multiply; }
</style>
